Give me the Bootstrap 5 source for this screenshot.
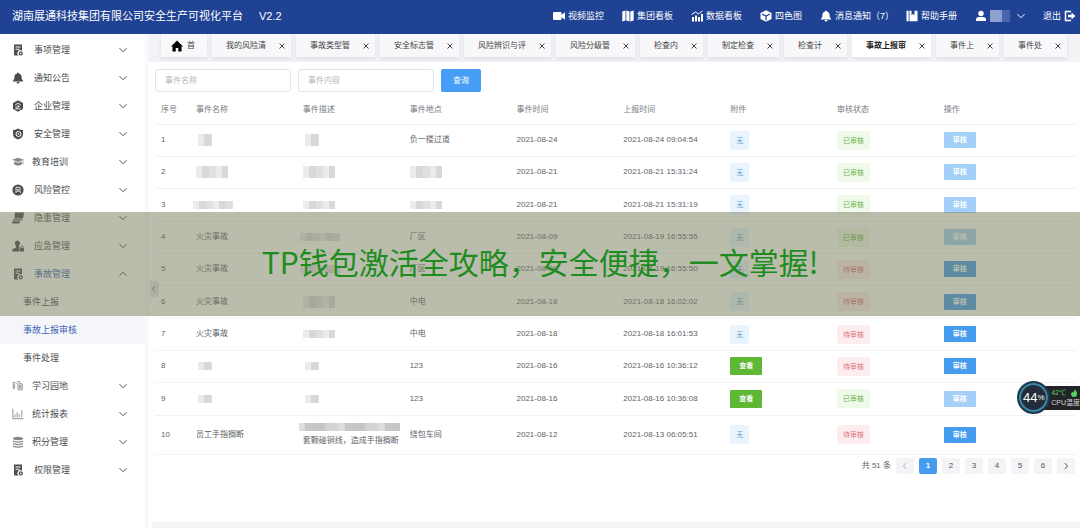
<!DOCTYPE html>
<html lang="zh-CN">
<head>
<meta charset="utf-8">
<meta name="viewport" content="width=device-width, initial-scale=1">
<title>安全生产可视化平台</title>
<link href="https://cdn.jsdelivr.net/npm/bootstrap@5.3.0/dist/css/bootstrap.min.css" rel="stylesheet">
<style>
body{font-family:"Liberation Sans","Noto Sans CJK SC",sans-serif;font-size:8px;line-height:12px;color:#606266;background:#fff;overflow-x:hidden}
a{color:inherit;text-decoration:none}
svg{display:block;flex:none}
.ic{width:12px;height:12px;fill:currentColor}
.chev{width:8px;height:8px;fill:none;stroke:currentColor}
/* top bar */
.topbar{height:34px;background:#1f4294;color:#fff;padding:0 4px 3px 12px;font-size:9px}
.topbar h1{font-size:11px;line-height:16px;font-weight:400;margin:0}
.toplink{gap:3px;margin-left:18px;white-space:nowrap}
.toplink.after-msg{margin-left:12px}
.who{width:20px;height:12px;background:linear-gradient(90deg,#8d9fd0 60%,#4a64ab 60%)}
/* side menu */
.side{width:149px;border-right:4px solid #f9f9fb;padding-top:2px;font-size:9px;color:#4b4d52}
.side a{height:28px;display:flex;align-items:center;padding:0 18px 0 12px}
.side .slot{width:22px}
.side .slot.wide{width:20px;color:#85878c}
.side .chev{margin-left:auto}
.side a.sub{padding-left:23px}
.side a.sub.on{background:#f5f6f9}
.side .on{color:#3e62b8}
/* opened pages */
.tabbar{height:28px;background:#f3f3f7;padding-left:12px;gap:5px;overflow:hidden}
.page-tab{height:23px;padding:0 5px 0 14px;background:#f8f8fa;box-shadow:0 2px 4px rgba(0,0,0,.08);color:#444;white-space:nowrap;gap:12px}
.page-tab.home{padding:0 12px 0 10px;gap:4px}
.page-tab.cur{background:#fff;color:#222;font-weight:700}
.tab-x{border:0;background:none;padding:0;width:8px;height:8px;color:#444}
/* search form */
.search{padding:7px 6px 0;gap:7px}
.search .form-control{width:136px;height:23px;min-height:0;font-size:8px;line-height:12px;padding:0 9px;border-color:#e2e4ea;border-radius:3px}
.search .form-control::placeholder{color:#b4b7bf}
.btn-query{width:40px;height:23px;padding:0;font-size:8px;line-height:12px;border:0;border-radius:2px;background:#459df5;color:#fff}
/* event table */
.table-box{padding:0 4px 0 6px}
.events{table-layout:fixed;margin:5px 0 0;color:#606266;--bs-table-bg:transparent}
.events th,.events td{padding:0 0 0 6px;border-color:#f1f2f5;vertical-align:middle;color:#606266;white-space:nowrap}
.events th{height:27px;font-weight:400;color:#777a80}
.events td{height:32px}
.events tbody tr:nth-child(3n) td{height:33px}
.events tbody tr.tall td{height:39px}
.c-no{width:35px}
.c-data{width:11.6%}
.state{display:inline-block;height:19px;line-height:19px;padding:0 6px;font-size:7px;border-radius:2px;vertical-align:middle}
.st-none{background:#e9f4ff;color:#5a9fc9}
.st-ok{background:#effaea;color:#6fb04c}
.st-wait{background:#feedef;color:#e0707a}
.act{width:32px;height:16px;border:0;border-radius:1px;padding:0;font-size:7px;line-height:16px;font-weight:700;background:#459bee;color:#fff;display:block}
.act:disabled{background:#a3cff9;color:#fff;opacity:1}
.act.view{height:18px;background:#5fb834}
/* masked values */
.mask{display:block;height:8px;background:repeating-linear-gradient(90deg,#ebebed 0 6px,#d8d8db 6px 13px,#e0e0e3 13px 20px)}
.mask.s{width:14px;margin-left:2px}
.mask.m{width:32px}
.mask.l{width:40px;margin-left:-3px}
.mask.xl{width:101px;margin-left:-4px;background:repeating-linear-gradient(90deg,#dedee0 0 6px,#c6c6c9 6px 26px,#d4d4d7 26px 40px)}
.mask.t{height:12px}
/* pager */
.pager{gap:6px;padding:3px 5px 0}
.pager .page-link{width:18px;height:16px;padding:0;border:0;border-radius:2px!important;background:#f4f4f7;color:#50535a;font-size:8px;line-height:16px;display:flex;align-items:center;justify-content:center}
.pager .active .page-link{background:#459bee;color:#fff;font-weight:700}
.pager .disabled .page-link{color:#b0b3ba}
.footline{height:6px;background:#f3f3f4;margin-left:3px}
/* layers over the page */
.fold{position:absolute;left:1px;top:247px;width:9px;height:16px;border:0;padding:0;background:#e3e4e8;border-radius:0 4px 4px 0;color:#8a8d94}
.ribbon{position:absolute;left:0;right:0;top:212px;height:104px;padding-bottom:6px;background:rgba(117,123,89,.5);color:#1f8c1f;font-size:30px;line-height:40px;font-family:"Noto Sans CJK SC",sans-serif;z-index:5}
.meter{position:absolute;right:0;top:381px;z-index:6;color:#d5d5d5}
.meter .dial{width:33px;height:33px;border-radius:50%;background:#252d3b;border:2px solid #1c3a50;box-shadow:inset 0 0 0 2px #3f88ab;color:#fff;font-size:13px;z-index:1}
.meter .dial small{font-size:8px}
.meter .read{height:24px;margin-left:-16px;padding-left:17px;background:#222326;font-size:7px;line-height:10px;white-space:nowrap}
.meter .deg{color:#52d860}
</style>
</head>
<body class="d-flex flex-column min-vh-100">
<svg class="d-none" aria-hidden="true">
<symbol id="down" viewBox="0 0 8 8"><path d="M.5 2.2 4 5.7l3.500-3.500"/></symbol>
<symbol id="up" viewBox="0 0 8 8"><path d="M.5 5.700 4 2.200l3.500 3.500"/></symbol>
<symbol id="left" viewBox="0 0 8 8"><path d="M5.200 1 2.500 4l2.700 3"/></symbol>
<symbol id="right" viewBox="0 0 8 8"><path d="M2.800 1l2.700 3-2.700 3"/></symbol>
<symbol id="cross" viewBox="0 0 8 8"><path d="M1.500 1.500l5 5m0-5l-5 5"/></symbol>
<symbol id="doc" viewBox="0 0 12 12"><path d="M2 .5h8v6.200a2.800 2.800 0 0 0-3.300 4.800H3a1 1 0 0 1-1-1zM3.500 2.500v1h5v-1zm0 2.300v1h4v-1z" fill-rule="evenodd"/><path d="M8.800 7.300a2.100 2.100 0 1 1 0 4.200 2.100 2.100 0 0 1 0-4.200zm0 1.300a.8.8 0 1 0 0 1.600.8.8 0 0 0 0-1.600z" fill-rule="evenodd"/></symbol>
<symbol id="bell" viewBox="0 0 12 12"><path d="M6 .5c.6 0 .9.400.9.900 1.800.4 2.700 1.900 2.700 3.600 0 2.200.6 3 1.600 3.800v.7H.8v-.7c1-.8 1.600-1.600 1.600-3.800 0-1.700.9-3.200 2.700-3.600 0-.5.3-.9.900-.9zM4.500 10h3a1.500 1.500 0 0 1-3 0z"/></symbol>
<symbol id="hex" viewBox="0 0 12 12"><path d="M6 .2 11 3v6l-5 2.800L1 9V3z"/><path d="M3 5.300 6 3l3 2.300M6 4.800v4M6 6.500h1.700M4.200 6.300v2.500M3.200 8.900h5.600" stroke="#fff" stroke-width=".8" fill="none"/></symbol>
<symbol id="shield" viewBox="0 0 12 12"><path d="M1 2q2.500 0 5-1.500Q8.500 2 11 2v4q0 4-5 5.500Q1 10 1 6z"/><circle cx="6.500" cy="6" r="2.500" fill="none" stroke="#fff"/><circle cx="6.500" cy="6" r=".8" fill="#fff"/></symbol>
<symbol id="cap" viewBox="0 0 14 12"><path d="M0 3.500 7 1l7 2.500L7 6z"/><path d="M2.500 5.500 7 7l4.500-1.500V9Q7 11.500 2.500 9zM12.500 4h.8v5h-.8z"/></symbol>
<symbol id="risk" viewBox="0 0 12 12"><circle cx="6" cy="6" r="5.600"/><path d="M4 9V3.300h4V8l1 1M4.800 5l2.500 3m0-3L4.800 8" stroke="#fff" stroke-width=".8" fill="none"/></symbol>
<symbol id="layers" viewBox="0 0 12 12"><path d="M3 .5h9l-1 6H2.500zM1 7.300h9.500l-.3 1.200H.800zM.5 9.300H8l-.8 2.200H0z"/></symbol>
<symbol id="rescue" viewBox="0 0 12 12"><path d="M5.300.5a2.900 2.900 0 0 1 1.500 5.300v1h.7v4.700H.3V9.300L4 7.500V5.800A2.900 2.900 0 0 1 5.300.5zM8.500 8.200V7a1.500 1.500 0 0 1 3 0v1.200h.5v3.300H8V8.200zm.8 0h1.400V7a.7.700 0 0 0-1.400 0z"/></symbol>
<symbol id="learn" viewBox="0 0 14 12"><path d="M1.500 10V1.500L6 3M6 .8h3v2M7 3.500h5v7H7zM8.500 5.500h2v3h-2zM3 4v5" fill="none" stroke="currentColor"/></symbol>
<symbol id="stat" viewBox="0 0 14 12"><path d="M1 0v11.500h12.500M3.500 10V6.500M6 10V4M8.500 10V6M11.500 10V1.500" fill="none" stroke="currentColor"/></symbol>
<symbol id="coins" viewBox="0 0 12 12"><path d="M1 2q5-2.500 10 0v1.200q-5 2-10 0zM1 4.500q5 2 10 0v1.200q-5 2-10 0zM1 7q5 2 10 0v1.200q-5 2-10 0zM1 9.500q5 2 10 0v1.200q-5 2-10 0z"/></symbol>
<symbol id="video" viewBox="0 0 12 12"><path d="M1 2h6.500a1 1 0 0 1 1 1v1.700L12 2.200v7.600L8.500 7.300V9a1 1 0 0 1-1 1H1a1 1 0 0 1-1-1V3a1 1 0 0 1 1-1z"/></symbol>
<symbol id="map" viewBox="0 0 12 12"><path d="M.3 1.500 3.500.5v10l-3.200 1zM4.300.5l3.200 1v10l-3.200-1zM8.300 1.500l3.400-1v10l-3.400 1z"/></symbol>
<symbol id="chart" viewBox="0 0 12 12"><path d="M1 7h2v4.500H1zM4 5.500h2v6H4zM7 7h2v4.500H7zM10 4h2v7.500h-2z"/><path d="M.5 4.500 4.500 2l3 2L11.500.8" fill="none" stroke="currentColor"/></symbol>
<symbol id="cube" viewBox="0 0 12 12"><path d="M6 .2 11.500 3v6L6 11.800.5 9V3z"/><path d="M2 4l4 2 4-2M6 6v4.500" stroke="#1f4294" fill="none" stroke-width="1.200"/></symbol>
<symbol id="book" viewBox="0 0 12 12"><path d="M.5.800h2.200v10.400H.5zM3.500.8h2v4.500L7 4l1.500 1.300V.8h3v10.400h-8z"/></symbol>
<symbol id="user" viewBox="0 0 12 12"><circle cx="6" cy="3.500" r="2.700"/><path d="M1 11V9.500Q1 7 4 7h4q3 0 3 2.500V11z"/></symbol>
<symbol id="exit" viewBox="0 0 12 12"><path d="M7 1.500H1.500v9H7" fill="none" stroke="currentColor" stroke-width="1.500"/><path d="M4 4.800h3.500V2.500L11.500 6 7.500 9.500V7.200H4z"/></symbol>
<symbol id="house" viewBox="0 0 12 12"><path d="M6 .5 12 6.500h-1.500v5H7.300V8H4.700v3.500H1.500v-5H0z"/></symbol>
<symbol id="flame" viewBox="0 0 8 8"><path d="M4.500 0Q7.500 3 7 5.500 6.500 8 4 8T1 5.500Q1 4 2.500 2.500l.5 1.500Q5 2.500 4.500 0z"/></symbol>
</svg>

<header class="topbar d-flex align-items-center">
  <h1 class="text-nowrap">湖南展通科技集团有限公司安全生产可视化平台<span class="ms-3">V2.2</span></h1>
  <nav class="d-flex align-items-center ms-auto">
    <a href="#" class="toplink d-flex align-items-center"><svg class="ic"><use href="#video"/></svg>视频监控</a>
    <a href="#" class="toplink d-flex align-items-center"><svg class="ic"><use href="#map"/></svg>集团看板</a>
    <a href="#" class="toplink d-flex align-items-center"><svg class="ic"><use href="#chart"/></svg>数据看板</a>
    <a href="#" class="toplink d-flex align-items-center"><svg class="ic"><use href="#cube"/></svg>四色图</a>
    <a href="#" class="toplink d-flex align-items-center"><svg class="ic"><use href="#bell"/></svg>消息通知（7）</a>
    <a href="#" class="toplink after-msg d-flex align-items-center"><svg class="ic"><use href="#book"/></svg>帮助手册</a>
    <a href="#" class="toplink d-flex align-items-center" aria-label="账户"><svg class="ic"><use href="#user"/></svg><span class="who"></span><svg class="chev ms-1"><use href="#down"/></svg></a>
    <a href="#" class="toplink d-flex align-items-center">退出<svg class="ic"><use href="#exit"/></svg></a>
  </nav>
</header>

<div class="d-flex align-items-stretch flex-grow-1">
  <nav class="side flex-shrink-0">
    <a href="#"><span class="slot"><svg class="ic"><use href="#doc"/></svg></span>事项管理<svg class="chev"><use href="#down"/></svg></a>
    <a href="#"><span class="slot"><svg class="ic"><use href="#bell"/></svg></span>通知公告<svg class="chev"><use href="#down"/></svg></a>
    <a href="#"><span class="slot"><svg class="ic"><use href="#hex"/></svg></span>企业管理<svg class="chev"><use href="#down"/></svg></a>
    <a href="#"><span class="slot"><svg class="ic"><use href="#shield"/></svg></span>安全管理<svg class="chev"><use href="#down"/></svg></a>
    <a href="#"><span class="slot wide"><svg class="ic"><use href="#cap"/></svg></span>教育培训<svg class="chev"><use href="#down"/></svg></a>
    <a href="#"><span class="slot"><svg class="ic"><use href="#risk"/></svg></span>风险管控<svg class="chev"><use href="#down"/></svg></a>
    <a href="#"><span class="slot"><svg class="ic"><use href="#layers"/></svg></span>隐患管理<svg class="chev"><use href="#down"/></svg></a>
    <a href="#"><span class="slot"><svg class="ic"><use href="#rescue"/></svg></span>应急管理<svg class="chev"><use href="#down"/></svg></a>
    <a href="#"><span class="slot"><svg class="ic"><use href="#doc"/></svg></span><span class="on">事故管理</span><svg class="chev"><use href="#up"/></svg></a>
    <a href="#" class="sub">事件上报</a>
    <a href="#" class="sub on">事故上报审核</a>
    <a href="#" class="sub">事件处理</a>
    <a href="#"><span class="slot wide"><svg class="ic"><use href="#learn"/></svg></span>学习园地<svg class="chev"><use href="#down"/></svg></a>
    <a href="#"><span class="slot wide"><svg class="ic"><use href="#stat"/></svg></span>统计报表<svg class="chev"><use href="#down"/></svg></a>
    <a href="#"><span class="slot wide"><svg class="ic"><use href="#coins"/></svg></span>积分管理<svg class="chev"><use href="#down"/></svg></a>
    <a href="#"><span class="slot"><svg class="ic"><use href="#doc"/></svg></span>权限管理<svg class="chev"><use href="#down"/></svg></a>
  </nav>

  <main class="flex-grow-1 position-relative d-flex flex-column overflow-hidden">
    <div class="tabbar d-flex">
      <a href="#" class="page-tab home d-flex align-items-center"><svg class="ic text-black"><use href="#house"/></svg>首</a>
      <div class="page-tab d-flex align-items-center">我的风险清<button class="tab-x" aria-label="关闭"><svg class="chev"><use href="#cross"/></svg></button></div>
      <div class="page-tab d-flex align-items-center">事故类型管<button class="tab-x" aria-label="关闭"><svg class="chev"><use href="#cross"/></svg></button></div>
      <div class="page-tab d-flex align-items-center">安全标志管<button class="tab-x" aria-label="关闭"><svg class="chev"><use href="#cross"/></svg></button></div>
      <div class="page-tab d-flex align-items-center">风险辨识与评<button class="tab-x" aria-label="关闭"><svg class="chev"><use href="#cross"/></svg></button></div>
      <div class="page-tab d-flex align-items-center">风险分级管<button class="tab-x" aria-label="关闭"><svg class="chev"><use href="#cross"/></svg></button></div>
      <div class="page-tab d-flex align-items-center">检查内<button class="tab-x" aria-label="关闭"><svg class="chev"><use href="#cross"/></svg></button></div>
      <div class="page-tab d-flex align-items-center">制定检查<button class="tab-x" aria-label="关闭"><svg class="chev"><use href="#cross"/></svg></button></div>
      <div class="page-tab d-flex align-items-center">检查计<button class="tab-x" aria-label="关闭"><svg class="chev"><use href="#cross"/></svg></button></div>
      <div class="page-tab cur d-flex align-items-center">事故上报审<button class="tab-x" aria-label="关闭"><svg class="chev"><use href="#cross"/></svg></button></div>
      <div class="page-tab d-flex align-items-center">事件上<button class="tab-x" aria-label="关闭"><svg class="chev"><use href="#cross"/></svg></button></div>
      <div class="page-tab d-flex align-items-center">事件处<button class="tab-x" aria-label="关闭"><svg class="chev"><use href="#cross"/></svg></button></div>
    </div>

    <form class="search d-flex">
      <input class="form-control" type="text" placeholder="事件名称" aria-label="事件名称">
      <input class="form-control" type="text" placeholder="事件内容" aria-label="事件内容">
      <button class="btn btn-query" type="button">查询</button>
    </form>

    <div class="table-box">
    <table class="table events">
      <colgroup><col class="c-no"><col class="c-data"><col class="c-data"><col class="c-data"><col class="c-data"><col class="c-data"><col class="c-data"><col class="c-data"><col></colgroup>
      <thead><tr><th>序号</th><th>事件名称</th><th>事件描述</th><th>事件地点</th><th>事件时间</th><th>上报时间</th><th>附件</th><th>审核状态</th><th>操作</th></tr></thead>
      <tbody>
        <tr><td>1</td><td><span class="mask s t"></span></td><td><span class="mask s t"></span></td><td>负一楼过道</td><td>2021-08-24</td><td>2021-08-24 09:04:54</td><td><span class="state st-none">无</span></td><td><span class="state st-ok">已审核</span></td><td><button class="act" disabled>审核</button></td></tr>
        <tr><td>2</td><td><span class="mask m t"></span></td><td><span class="mask m t"></span></td><td><span class="mask m t"></span></td><td>2021-08-21</td><td>2021-08-21 15:31:24</td><td><span class="state st-none">无</span></td><td><span class="state st-ok">已审核</span></td><td><button class="act" disabled>审核</button></td></tr>
        <tr><td>3</td><td><span class="mask l"></span></td><td><span class="mask m"></span></td><td><span class="mask m"></span></td><td>2021-08-21</td><td>2021-08-21 15:31:19</td><td><span class="state st-none">无</span></td><td><span class="state st-ok">已审核</span></td><td><button class="act" disabled>审核</button></td></tr>
        <tr><td>4</td><td>火灾事故</td><td><span class="mask l"></span></td><td>厂区</td><td>2021-08-09</td><td>2021-08-19 16:55:55</td><td><span class="state st-none">无</span></td><td><span class="state st-ok">已审核</span></td><td><button class="act" disabled>审核</button></td></tr>
        <tr><td>5</td><td>火灾事故</td><td><span class="mask l"></span></td><td>厂区</td><td>2021-08-09</td><td>2021-08-19 16:55:50</td><td><span class="state st-none">无</span></td><td><span class="state st-wait">待审核</span></td><td><button class="act">审核</button></td></tr>
        <tr><td>6</td><td>火灾事故</td><td><span class="mask m t"></span></td><td>中电</td><td>2021-08-18</td><td>2021-08-18 16:02:02</td><td><span class="state st-none">无</span></td><td><span class="state st-wait">待审核</span></td><td><button class="act">审核</button></td></tr>
        <tr><td>7</td><td>火灾事故</td><td><span class="mask m"></span></td><td>中电</td><td>2021-08-18</td><td>2021-08-18 16:01:53</td><td><span class="state st-none">无</span></td><td><span class="state st-wait">待审核</span></td><td><button class="act">审核</button></td></tr>
        <tr><td>8</td><td><span class="mask s"></span></td><td><span class="mask s"></span></td><td>123</td><td>2021-08-16</td><td>2021-08-16 10:36:12</td><td><button class="act view">查看</button></td><td><span class="state st-wait">待审核</span></td><td><button class="act">审核</button></td></tr>
        <tr><td>9</td><td><span class="mask s"></span></td><td><span class="mask s"></span></td><td>123</td><td>2021-08-16</td><td>2021-08-16 10:36:08</td><td><button class="act view">查看</button></td><td><span class="state st-ok">已审核</span></td><td><button class="act" disabled>审核</button></td></tr>
        <tr class="tall"><td>10</td><td>员工手指搁断</td><td><span class="mask xl mb-1"></span>套颗碰铜线，造成手指搁断</td><td>绕包车间</td><td>2021-08-12</td><td>2021-08-13 06:05:51</td><td><span class="state st-none">无</span></td><td><span class="state st-wait">待审核</span></td><td><button class="act">审核</button></td></tr>
      </tbody>
    </table>
    </div>

    <nav aria-label="分页">
      <ul class="pagination pager justify-content-end align-items-center mb-0">
        <li>共 51 条</li>
        <li class="page-item disabled"><a class="page-link" href="#" aria-label="上一页"><svg class="chev"><use href="#left"/></svg></a></li>
        <li class="page-item active"><a class="page-link" href="#">1</a></li>
        <li class="page-item"><a class="page-link" href="#">2</a></li>
        <li class="page-item"><a class="page-link" href="#">3</a></li>
        <li class="page-item"><a class="page-link" href="#">4</a></li>
        <li class="page-item"><a class="page-link" href="#">5</a></li>
        <li class="page-item"><a class="page-link" href="#">6</a></li>
        <li class="page-item"><a class="page-link" href="#" aria-label="下一页"><svg class="chev"><use href="#right"/></svg></a></li>
      </ul>
    </nav>
    <div class="footline mt-auto"></div>
    <button class="fold" aria-label="收起菜单"><svg class="chev"><use href="#left"/></svg></button>
  </main>
</div>

<div class="ribbon d-flex align-items-center justify-content-center text-nowrap">TP钱包激活全攻略，安全便捷，一文掌握!</div>
<div class="meter d-flex align-items-center">
  <div class="dial d-flex align-items-center justify-content-center">44<small>%</small></div>
  <div class="read d-flex flex-column justify-content-center"><span class="deg d-flex align-items-center">42℃<svg class="ms-1" width="8" height="8" fill="#52d860"><use href="#flame"/></svg></span><span>CPU温度</span></div>
</div>
<script src="https://cdn.jsdelivr.net/npm/bootstrap@5.3.0/dist/js/bootstrap.bundle.min.js"></script>
</body>
</html>
